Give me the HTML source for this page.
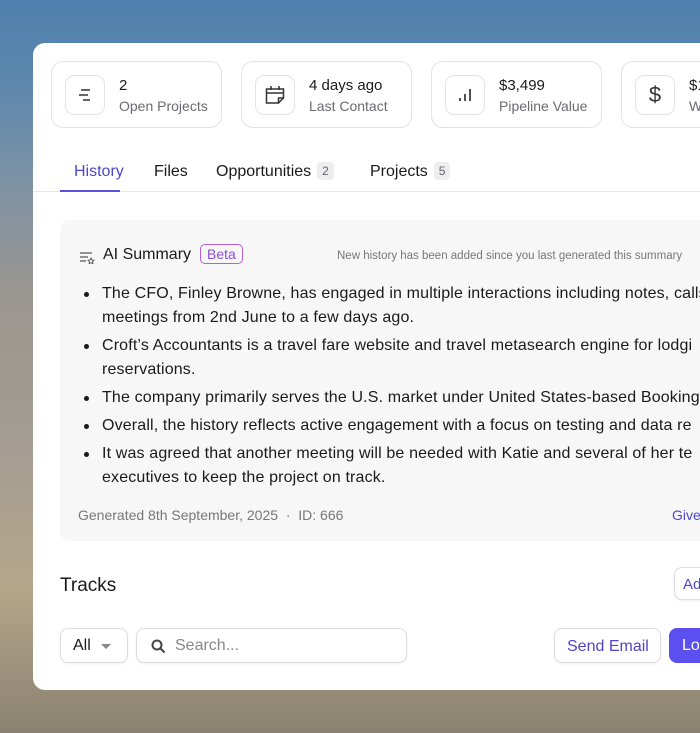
<!DOCTYPE html>
<html><head><meta charset="utf-8"><style>
*{box-sizing:border-box;margin:0;padding:0}
body{width:700px;height:733px;overflow:hidden;position:relative;font-family:"Liberation Sans",sans-serif;
background:linear-gradient(180deg,#4f80ad 0%,#5a86ad 10%,#7e92a5 25%,#9a9690 40%,#a39c92 60%,#b5a68a 80%,#8a8270 100%);}
.card{position:absolute;left:33px;top:43px;width:700px;height:647px;background:#fff;border-radius:12px;overflow:hidden}
.stat{position:absolute;top:18px;width:171px;height:67px;border:1px solid #e3e3e6;border-radius:12px}
.ib{position:absolute;left:13px;top:13px;width:40px;height:40px;border:1px solid #e3e3e6;border-radius:9px;display:flex;align-items:center;justify-content:center}
.sv{position:absolute;left:67px;top:15px;font-size:15px;color:#1a1a1a}
.sl{position:absolute;left:67px;top:36px;font-size:14px;color:#6b6b70}
.tab{position:absolute;top:119px;font-size:16px;line-height:20px;color:#1a1a1a;white-space:nowrap}
.badge{display:inline-block;background:#eeeef0;color:#666;font-size:12px;line-height:14px;padding:2px 5px;border-radius:4px;margin-left:6px;vertical-align:1px}
.sum{position:absolute;left:27px;top:177px;width:700px;height:321px;background:#f7f7f8;border-radius:10px}
ul{position:absolute;left:42px;top:62px;list-style:none;font-size:16px;letter-spacing:0.15px;color:#1a1a1a;line-height:24px;white-space:nowrap}
li{position:relative;margin-bottom:4px}
li:before{content:"";position:absolute;left:-18px;top:10px;width:5px;height:5px;border-radius:50%;background:#1a1a1a}
.btn{position:absolute;border:1px solid #dcdce0;border-radius:8px;background:#fff;box-shadow:0 1px 2px rgba(0,0,0,.06);white-space:nowrap}
</style></head><body>
<div class="card">
 <div class="stat" style="left:18px"><div class="ib"><svg width="24" height="24"><path d="M8 7h9M6 12h9M10 17h7" stroke="#333" stroke-width="1.6"/></svg></div><div class="sv">2</div><div class="sl">Open Projects</div></div>
 <div class="stat" style="left:208px"><div class="ib"><svg width="24" height="24" fill="none" stroke="#333" stroke-width="1.5"><path d="M3.5 6h17v9l-5 5h-12z M3.5 10h17 M8 3v4 M16 3v4 M15.5 20v-5h5"/></svg></div><div class="sv">4 days ago</div><div class="sl">Last Contact</div></div>
 <div class="stat" style="left:398px"><div class="ib"><svg width="24" height="24" stroke="#333" stroke-width="1.7"><path d="M7 18v-3M12 18v-7M17 18V6"/></svg></div><div class="sv">$3,499</div><div class="sl">Pipeline Value</div></div>
 <div class="stat" style="left:588px"><div class="ib" style="font-size:22px;color:#333">$</div><div class="sv">$1</div><div class="sl">W</div></div>
 <div class="tab" style="left:41px;color:#4f46c8">History</div>
 <div class="tab" style="left:121px">Files</div>
 <div class="tab" style="left:183px">Opportunities<span class="badge">2</span></div>
 <div class="tab" style="left:337px">Projects<span class="badge">5</span></div>
 <div style="position:absolute;left:0;top:148px;width:700px;height:1px;background:#e6e6e8"></div>
 <div style="position:absolute;left:27px;top:147px;width:60px;height:2px;background:#5a4fe0"></div>
 <div class="sum">
  <svg style="position:absolute;left:19px;top:30px" width="16" height="14" stroke="#555" stroke-width="1.2" fill="none"><path d="M1 3h12M1 7h8M1 11h6"/><path d="M12 8l1 2 2 .3-1.5 1.4.4 2-1.9-1-1.9 1 .4-2L9 10.3l2-.3z" stroke-width="0.9"/></svg>
  <div style="position:absolute;left:43px;top:26px;font-size:16px;color:#1a1a1a">AI Summary</div>
  <div style="position:absolute;left:140px;top:24px;border:1px solid #b65fd0;border-radius:5px;padding:1px 6px;font-size:14px;color:#8a4fd0">Beta</div>
  <div style="position:absolute;left:277px;top:30px;font-size:11.5px;color:#777">New history has been added since you last generated this summary</div>
  <ul>
   <li>The CFO, Finley Browne, has engaged in multiple interactions including notes, calls<br>meetings from 2nd June to a few days ago.</li>
   <li>Croft’s Accountants is a travel fare website and travel metasearch engine for lodgi<br>reservations.</li>
   <li>The company primarily serves the U.S. market under United States-based Booking</li>
   <li>Overall, the history reflects active engagement with a focus on testing and data re</li>
   <li>It was agreed that another meeting will be needed with Katie and several of her te<br>executives to keep the project on track.</li>
  </ul>
  <div style="position:absolute;left:18px;top:287px;font-size:14px;color:#777">Generated 8th September, 2025 &nbsp;·&nbsp; ID: 666</div>
  <div style="position:absolute;left:612px;top:287px;font-size:14px;color:#4f46c8">Give</div>
 </div>
 <div style="position:absolute;left:27px;top:532px;font-size:19px;color:#1a1a1a">Tracks</div>
 <div class="btn" style="left:641px;top:524px;width:40px;height:33px;padding:8px 8px;font-size:15px;color:#4f46c8">Ad</div>
 <div class="btn" style="left:27px;top:585px;width:68px;height:35px;padding:8px 12px;font-size:16px;color:#1a1a1a">All<span style="position:absolute;left:40px;top:15px;border:5px solid transparent;border-top:5px solid #888"></span></div>
 <div class="btn" style="left:103px;top:585px;width:271px;height:35px">
  <svg style="position:absolute;left:14px;top:10px" width="15" height="15" fill="none" stroke="#444" stroke-width="2"><circle cx="6" cy="6" r="4.5"/><path d="M9.5 9.5l4 4"/></svg>
  <span style="position:absolute;left:38px;top:8px;font-size:16px;color:#888">Search...</span></div>
 <div class="btn" style="left:521px;top:585px;width:107px;height:35px;padding:9px 12px;font-size:16px;color:#4f46c8">Send Email</div>
 <div style="position:absolute;left:636px;top:585px;width:80px;height:35px;background:#5b4ff0;border-radius:8px;padding:9px 13px;font-size:16px;color:#fff">Lo</div>
</div>
</body></html>
